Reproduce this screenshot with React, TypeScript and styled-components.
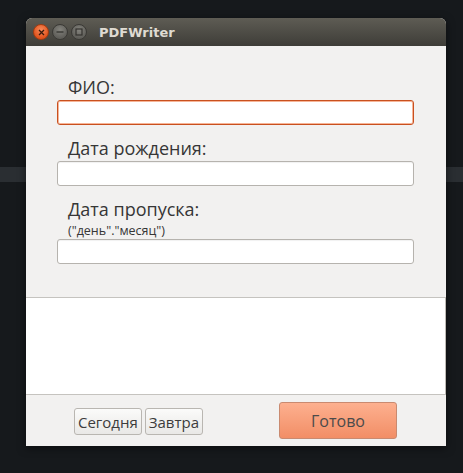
import React from 'react';
import styled, { createGlobalStyle } from 'styled-components';

const GlobalStyle = createGlobalStyle`
  html, body {
    margin: 0;
    padding: 0;
  }
  body {
    width: 463px;
    height: 473px;
    overflow: hidden;
    background: linear-gradient(
      to bottom,
      #16191c 0,
      #16191c 167px,
      #2a2e32 167px,
      #2a2e32 182px,
      #16191c 182px
    );
    font-family: 'Open Sans', 'DejaVu Sans', sans-serif;
  }
`;

const Desktop = styled.div`
  padding: 18px 0 0 26px;
`;

const Window = styled.div`
  width: 420px;
  height: 428px;
  display: flex;
  flex-direction: column;
  background: #f2f1f0;
  border-radius: 6px 6px 0 0;
  box-shadow: 0 2px 8px rgba(0, 0, 0, 0.5);
`;

const TitleBar = styled.div`
  height: 28px;
  flex: none;
  display: flex;
  align-items: center;
  padding-left: 7px;
  border-radius: 6px 6px 0 0;
  background: linear-gradient(to bottom, #5e5c54, #3e3d38);
`;

const WinButtons = styled.div`
  display: flex;
  gap: 3px;
  margin-right: 12px;
`;

const WinButton = styled.div<{ $close?: boolean }>`
  width: 16px;
  height: 16px;
  border-radius: 50%;
  display: flex;
  align-items: center;
  justify-content: center;
  box-sizing: border-box;
  border: 1px solid ${({ $close }) => ($close ? '#a33b10' : '#3a3935')};
  background: ${({ $close }) =>
    $close
      ? 'radial-gradient(circle at 50% 35%, #f88a5a, #e0531d 70%)'
      : 'radial-gradient(circle at 50% 35%, #84837d, #5f5e59 70%)'};
`;

const Title = styled.span`
  font-family: 'DejaVu Sans', 'Open Sans', sans-serif;
  font-weight: bold;
  font-size: 13px;
  color: #dfdbd2;
`;

const Form = styled.div`
  padding: 29px 31px 33px 31px;
  display: flex;
  flex-direction: column;
  gap: 11px;
`;

const Field = styled.div`
  display: flex;
  flex-direction: column;
`;

const Label = styled.div`
  font-size: 18px;
  line-height: 25px;
  color: #363636;
  padding-left: 11px;
`;

const Hint = styled.div`
  font-size: 12.5px;
  line-height: 17px;
  color: #363636;
  padding-left: 11px;
`;

const Input = styled.input<{ $focused?: boolean }>`
  box-sizing: border-box;
  width: 357px;
  height: 25px;
  margin: 0;
  padding: 0 6px;
  background: #fff;
  border-radius: 3px;
  outline: none;
  font: inherit;
  border: 1px solid ${({ $focused }) => ($focused ? '#c9501f' : '#b6b3ae')};
  box-shadow: ${({ $focused }) =>
    $focused ? 'inset 0 0 0 1px #f6b597' : 'inset 0 1px 1px rgba(0,0,0,0.06)'};
`;

const Output = styled.div`
  height: 98px;
  flex: none;
  box-sizing: border-box;
  background: #fff;
  border-top: 1px solid #c5c3bf;
  border-bottom: 1px solid #c5c3bf;
  border-right: 1px solid #bdbab5;
`;

const Footer = styled.div`
  flex: 1;
  display: flex;
  align-items: center;
  justify-content: space-between;
  padding: 0 49px 0 48px;
`;

const DayButtons = styled.div`
  display: flex;
  gap: 3px;
  margin-top: 2px;
`;

const SmallButton = styled.button`
  height: 27px;
  padding: 0 3px;
  box-sizing: border-box;
  border: 1px solid #b9b6b1;
  border-radius: 3px;
  background: linear-gradient(to bottom, #fbfbfa, #e9e8e6);
  font-family: 'Open Sans', 'DejaVu Sans', sans-serif;
  font-size: 15px;
  color: #3c3c3c;
`;

const DoneButton = styled.button`
  width: 118px;
  height: 37px;
  box-sizing: border-box;
  border: 1px solid #c98a70;
  border-radius: 3px;
  background: linear-gradient(to bottom, #fdb08f, #f28e66);
  font-family: 'Open Sans', 'DejaVu Sans', sans-serif;
  font-size: 16px;
  color: #4b4b4b;
`;

const App = () => {
  return (
    <>
      <GlobalStyle />
      <Desktop>
        <Window>
          <TitleBar>
            <WinButtons>
              <WinButton $close>
                <svg width="7" height="7" viewBox="0 0 7 7">
                  <path d="M1 1L6 6M6 1L1 6" stroke="#3b1a0c" strokeWidth="1.3" />
                </svg>
              </WinButton>
              <WinButton>
                <svg width="8" height="8" viewBox="0 0 8 8">
                  <path d="M0.5 4H7.5" stroke="#34332f" strokeWidth="1.3" />
                </svg>
              </WinButton>
              <WinButton>
                <svg width="8" height="8" viewBox="0 0 8 8">
                  <rect x="1" y="1" width="6" height="6" fill="none" stroke="#34332f" strokeWidth="1.2" />
                </svg>
              </WinButton>
            </WinButtons>
            <Title>PDFWriter</Title>
          </TitleBar>

          <Form>
            <Field>
              <Label>ФИО:</Label>
              <Input $focused />
            </Field>
            <Field>
              <Label>Дата рождения:</Label>
              <Input />
            </Field>
            <Field>
              <Label>Дата пропуска:</Label>
              <Hint>("день"."месяц")</Hint>
              <Input />
            </Field>
          </Form>

          <Output />

          <Footer>
            <DayButtons>
              <SmallButton>Сегодня</SmallButton>
              <SmallButton>Завтра</SmallButton>
            </DayButtons>
            <DoneButton>Готово</DoneButton>
          </Footer>
        </Window>
      </Desktop>
    </>
  );
};

export default App;
